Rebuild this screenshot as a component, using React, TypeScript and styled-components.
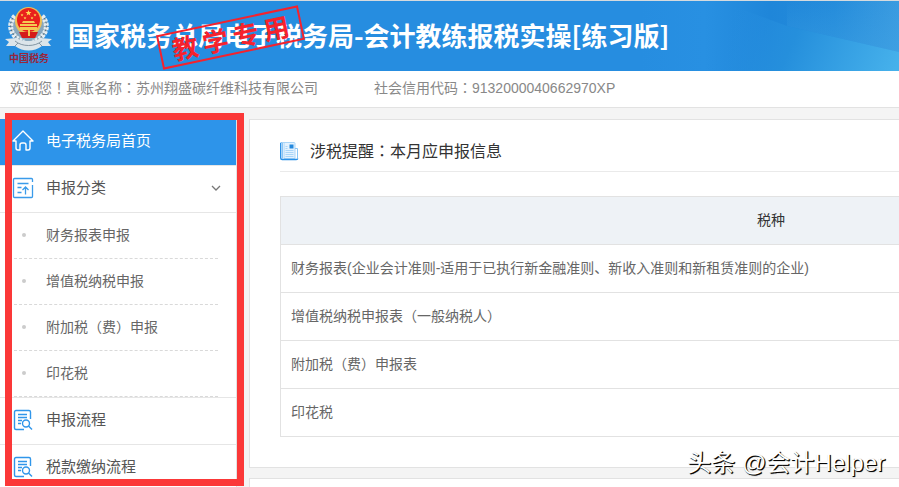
import React from "react";
import styled, { createGlobalStyle } from "styled-components";

const GlobalStyle = createGlobalStyle`
  * { box-sizing: border-box; }
  body {
    margin: 0;
    background: #f4f4f4;
    color: #555;
    font: 14px/20px "Liberation Sans", "Noto Sans CJK SC", sans-serif;
  }
  ul { list-style: none; margin: 0; padding: 0; }
  a { color: inherit; text-decoration: none; }
`;

const Page = styled.div`
  display: flex;
  flex-direction: column;
  height: 100vh;
  overflow: hidden;
`;

const Header = styled.header`
  position: relative;
  flex: none;
  display: flex;
  align-items: center;
  height: 71px;
  padding-left: 5px;
  border-top: 1px solid #d5dade;
  background: #268de0;
`;

const Scenery = styled.svg`
  position: absolute;
  top: 0;
  right: 0;
  height: 100%;
`;

const Brand = styled.div`
  position: relative;
  display: flex;
  flex-direction: column;
  align-items: center;
  width: 48px;
  padding-bottom: 4px;
`;

const BrandName = styled.span`
  font: bold 10px/12px "Noto Sans CJK SC", sans-serif;
  color: #98263c;
`;

const Title = styled.h1`
  position: relative;
  margin: 0 0 0 15px;
  padding-bottom: 2px;
  color: #fff;
  font: bold 26px/36px "Noto Sans CJK SC", sans-serif;
  white-space: nowrap;
`;

const Stamp = styled.div`
  position: absolute;
  top: 19px;
  left: 158px;
  display: flex;
  justify-content: center;
  gap: 5px;
  width: 145px;
  height: 35px;
  border: 2px solid #f5222d;
  color: #f5222d;
  font: bold 26px/30px "Noto Sans CJK SC", sans-serif;
  transform: rotate(-12deg);
`;

const InfoBar = styled.div`
  flex: none;
  display: flex;
  gap: 56px;
  align-items: center;
  height: 37px;
  padding: 0 10px 2px;
  border-bottom: 1px solid #e2e2e2;
  background: #fff;
  color: #888;
  white-space: nowrap;
`;

/* Traditional forms centre the full-width punctuation in its square. */
const CentredMark = styled.span`
  font-family: "Noto Sans CJK TC", sans-serif;
  line-height: 1;
`;

const Body = styled.div`
  position: relative;
  flex: 1;
  display: flex;
  align-items: stretch;
  gap: 12px;
  min-height: 0;
  padding-top: 11px;
`;

const Sidebar = styled.nav`
  flex: none;
  width: 237px;
  border-right: 1px solid #e2e2e2;
  background: #fff;
`;

const MenuLink = styled.a<{ $active?: boolean }>`
  display: flex;
  align-items: center;
  gap: 12px;
  height: 47px;
  padding: 0 14px 2px 12px;
  border-bottom: 1px solid #e6e6e6;
  background: ${(p) => (p.$active ? "#2d94ea" : "#fff")};
  color: ${(p) => (p.$active ? "#fff" : "#555")};
  font-size: 15px;
`;

const MenuLabel = styled.span`
  flex: 1;
`;

const SubMenu = styled.ul`
  border-bottom: 1px solid #e6e6e6;
`;

const SubItem = styled.li`
  margin: 0 18px 0 9px;
  border-bottom: 1px dashed #d9d9d9;
`;

const SubLink = styled.a`
  display: flex;
  align-items: center;
  height: 45px;
  padding: 0 0 2px 13px;
  color: #666;

  &::before {
    content: "";
    width: 4px;
    height: 4px;
    margin-right: 20px;
    border-radius: 2px;
    background: #ccc;
  }
`;

const Highlight = styled.div`
  position: absolute;
  top: 5px;
  bottom: 1px;
  left: 5px;
  width: 239px;
  border: 7px solid #fb3838;
  pointer-events: none;
`;

const Main = styled.main`
  flex: 1;
  display: flex;
  flex-direction: column;
  gap: 10px;
  min-width: 0;
  overflow: hidden;
`;

const Panel = styled.section`
  flex: none;
  min-width: 1044px;
  padding: 12px 30px 30px;
  border: 1px solid #e2e2e2;
  background: #fff;
`;

const PanelHeading = styled.h2`
  display: flex;
  align-items: center;
  gap: 11px;
  height: 40px;
  margin: 0 0 24px;
  border-bottom: 1px solid #eaeaea;
  color: #333;
  font-size: 16px;
  font-weight: normal;
`;

const TaxTable = styled.table`
  width: 100%;
  border-collapse: collapse;

  th, td {
    height: 48px;
    padding: 0 10px 2px;
    border: 1px solid #e2e2e2;
    font-weight: normal;
  }
  th { background: #eef2f6; color: #333; }
  td { color: #666; }
`;

const Watermark = styled.div`
  position: absolute;
  right: 14px;
  bottom: 8px;
  color: #fff;
  font-size: 24px;
  line-height: 32px;
  white-space: nowrap;
  text-shadow: 1px 1px 1px #000, 1px 1px 0 #222;
`;

function Emblem() {
  const star = "M0-3 .8-1 3-.9 1.2.4 1.9 2.6 0 1.3-1.9 2.6-1.2.4-3-.9-.8-1Z";
  return (
    <svg width="48" height="47" viewBox="0 1 48 47" aria-hidden="true">
      <path d="M9 13C1 22 7 35 19 40l10 0C41 35 47 22 39 13l-4 4-22 0Z" fill="#87a7bd" />
      <g fill="none" stroke="#e4ecf0" strokeWidth="5" strokeDasharray="3 1">
        <path d="M10 12C1 22 7 34 19 38" />
        <path d="M37 12C46 22 40 34 28 38" />
      </g>
      <g fill="none" stroke="#5c6b75" strokeWidth="1" strokeDasharray="2 2">
        <path d="M8 14C2 22 8 34 17 37" />
        <path d="M39 14C45 22 39 34 30 37" />
      </g>
      <ellipse cx="23.5" cy="17" rx="13.5" ry="14" fill="#ebc057" />
      <ellipse cx="23.5" cy="16" rx="11.5" ry="12" fill="#e9211c" />
      <path d="M14 28h19l-3 6H17Z" fill="#d51c1a" />
      <path d="M15 20h17v2H15Zm3-3h11l1 2H17Zm-3 6h17v3H15Zm8 3h2v6h-2Z" fill="#f4cb52" />
      <g fill="#ffdc55">
        <path transform="translate(23.5 9)" d={star} />
        <path transform="translate(17 11) scale(.5)" d={star} />
        <path transform="translate(30 11) scale(.5)" d={star} />
        <path transform="translate(20 14) scale(.5)" d={star} />
        <path transform="translate(27 14) scale(.5)" d={star} />
      </g>
      <path d="M0 35l12-1c4 4 19 4 23 0l12 1-4 3 3 4-9 0c-8 6-19 6-27 0l-9 0 3-4Z" fill="#dce5ea" />
      <path d="M10 37c7 6 20 6 27 0M10 42l3-3M37 42l-3-3" fill="none" stroke="#8396a3" />
    </svg>
  );
}

function HomeIcon() {
  return (
    <svg width="22" height="22" viewBox="0 0 22 22" fill="none" stroke="#fff" strokeWidth="1.4" strokeLinejoin="round" strokeLinecap="round" aria-hidden="true">
      <path d="M4 11H1L11 1l10 10h-3v7q0 2-2 2h-2v-5q0-2-2-2h-2q-2 0-2 2v5H6q-2 0-2-2Z" />
    </svg>
  );
}

function DeclareIcon() {
  return (
    <svg width="22" height="22" viewBox="0 0 22 22" fill="none" stroke="#3a9bea" strokeWidth="1.3" aria-hidden="true">
      <path d="M20.5 5V2.5q0-1-1-1h-17q-1 0-1 1v17q0 1 1 1h17q1 0 1-1V8M5.5 6.5h11M5.5 10.5h4M5.5 15.5h4M13.5 17.5v-7M10.5 13l3-3 3 3" />
    </svg>
  );
}

function ProcessIcon() {
  return (
    <svg width="22" height="22" viewBox="0 0 22 22" fill="none" stroke="#3096ea" strokeWidth="1.4" aria-hidden="true">
      <path d="M12 20.5H4q-1.500 0-1.500-1.500V3q0-1.500 1.500-1.500h13q1.500 0 1.500 1.500v7M6 5.500h9M6 8.500h9M6 11.500h4M6 14.500h3" />
      <circle cx="14" cy="14.500" r="3.500" />
      <path d="m16.500 17 3.500 3.500" />
    </svg>
  );
}

function ChevronIcon() {
  return (
    <svg width="12" height="12" viewBox="0 0 12 12" fill="none" stroke="#777" strokeWidth="1.300" aria-hidden="true">
      <path d="m2 4 4 4 4-4" />
    </svg>
  );
}

function NewsIcon() {
  return (
    <svg width="19" height="19" viewBox="0 0 19 19" fill="none" aria-hidden="true">
      <path d="M3 .5h11q1 0 1 1v15H4V1" fill="#e4f2fe" stroke="#a9d5f8" />
      <path d="M.5 .5h2v16M15 6.500h2.500v10" stroke="#8bc5f5" />
      <path d="M.7 1v15q0 1.500 1.500 1.500h14q1.500 0 1.500-1" stroke="#2a91e8" strokeWidth="1.400" />
      <path d="M9.500 2.500h4v4h-4Z" fill="#2488dd" />
      <path d="M5.500 4.500h2M5.500 6.500h2M5.500 8.500h8M5.500 10.500h8M5.500 12.500h8M5.500 14.500h8" stroke="#a9d5f8" />
    </svg>
  );
}

function HeaderScenery() {
  return (
    <Scenery viewBox="0 0 259 70" aria-hidden="true">
      <defs>
        <linearGradient id="sky">
          <stop offset="0" stopColor="#268de0" />
          <stop offset=".25" stopColor="#2890e2" />
          <stop offset=".5" stopColor="#1f86d9" />
          <stop offset=".75" stopColor="#258cdb" />
          <stop offset="1" stopColor="#3a9be0" />
        </linearGradient>
        <linearGradient id="haze" x2="0" y2="1">
          <stop offset="0" stopColor="#45a8e6" stopOpacity="0" />
          <stop offset="1" stopColor="#45a8e6" stopOpacity=".7" />
        </linearGradient>
        <linearGradient id="slope" gradientUnits="userSpaceOnUse" x1="90" y1="10" x2="250" y2="80">
          <stop offset="0" stopColor="#268de0" stopOpacity="0" />
          <stop offset=".4" stopColor="#258fdc" />
          <stop offset="1" stopColor="#46b1eb" />
        </linearGradient>
      </defs>
      <path d="M0 0h259v70H0Z" fill="url(#sky)" />
      <path d="M147 0h112v51L147 25Z" fill="url(#haze)" opacity=".5" />
      <path d="M40 70 80 0 147 25l112 26v19Z" fill="url(#slope)" />
    </Scenery>
  );
}

const subItems = ["财务报表申报", "增值税纳税申报", "附加税（费）申报", "印花税"];
const processItems = ["申报流程", "税款缴纳流程"];
const taxes = [
  "财务报表(企业会计准则-适用于已执行新金融准则、新收入准则和新租赁准则的企业)",
  "增值税纳税申报表（一般纳税人）",
  "附加税（费）申报表",
  "印花税",
];

function Mark({ children }: { children: string }) {
  return <CentredMark lang="zh-TW">{children}</CentredMark>;
}

export default function App() {
  return (
    <Page lang="zh-CN">
      <GlobalStyle />
      <Header>
        <HeaderScenery />
        <Brand>
          <Emblem />
          <BrandName>中国税务</BrandName>
        </Brand>
        <Title>国家税务总局电子税务局-会计教练报税实操[练习版]</Title>
        <Stamp>
          {Array.from("教学专用").map((c) => (
            <span key={c}>{c}</span>
          ))}
        </Stamp>
      </Header>
      <InfoBar>
        <span>欢迎您<Mark>！</Mark>真账名称<Mark>：</Mark>苏州翔盛碳纤维科技有限公司</span>
        <span>社会信用代码<Mark>：</Mark>9132000040662970XP</span>
      </InfoBar>
      <Body>
        <Sidebar>
          <ul>
            <li>
              <MenuLink href="#home" $active>
                <HomeIcon />
                <MenuLabel>电子税务局首页</MenuLabel>
              </MenuLink>
            </li>
            <li>
              <MenuLink href="#declare">
                <DeclareIcon />
                <MenuLabel>申报分类</MenuLabel>
                <ChevronIcon />
              </MenuLink>
              <SubMenu>
                {subItems.map((label) => (
                  <SubItem key={label}>
                    <SubLink href="#form">{label}</SubLink>
                  </SubItem>
                ))}
              </SubMenu>
            </li>
            {processItems.map((label) => (
              <li key={label}>
                <MenuLink href="#process">
                  <ProcessIcon />
                  <MenuLabel>{label}</MenuLabel>
                </MenuLink>
              </li>
            ))}
          </ul>
        </Sidebar>
        <Main>
          <Panel>
            <PanelHeading>
              <NewsIcon />
              <span>涉税提醒<Mark>：</Mark>本月应申报信息</span>
            </PanelHeading>
            <TaxTable>
              <thead>
                <tr><th scope="col">税种</th></tr>
              </thead>
              <tbody>
                {taxes.map((name) => (
                  <tr key={name}><td>{name}</td></tr>
                ))}
              </tbody>
            </TaxTable>
          </Panel>
          <Panel />
        </Main>
        <Highlight />
        <Watermark>头条 @会计Helper</Watermark>
      </Body>
    </Page>
  );
}
